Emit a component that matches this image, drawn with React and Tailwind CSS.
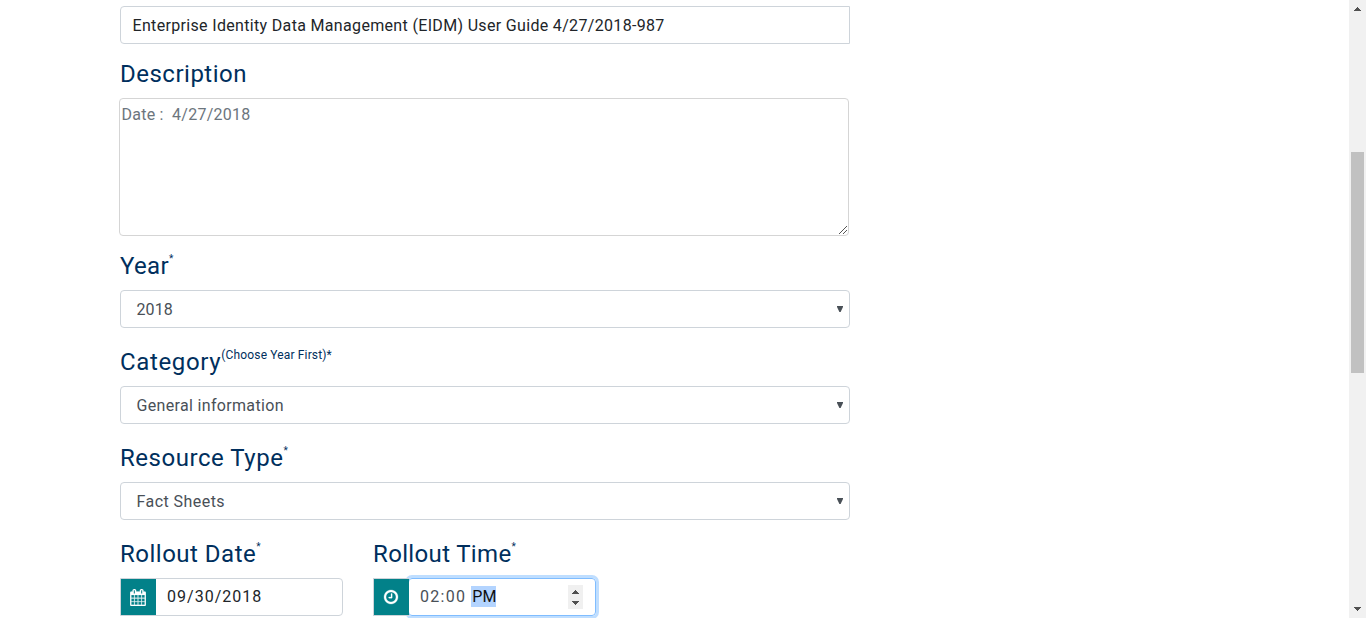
function Label({ children, note = "", tracking, noteClass = "text-[10px] mb-[16px]" }) {
  return (
    <div className="flex h-[54px] items-end pb-[10px] text-[#002f5d]">
      <span className={"whitespace-nowrap text-[24px] leading-[28px] " + tracking}>{children}</span>
      {note && <sup className={"top-0 self-end whitespace-nowrap leading-none " + noteClass}>{note}</sup>}
    </div>
  );
}

function Select({ value, tracking }) {
  return (
    <div className="flex h-[38px] items-center justify-between rounded-[4px] border border-[#ced4da] pr-[6px] pl-[15.5px] text-[#495057]">
      <span className={"mt-[2px] text-[16px] leading-6 " + tracking}>{value}</span>
      <svg width="6" height="6" viewBox="0 0 6 6" className="mb-[1px]" fill="#495057">
        <path d="M0 0H6V1L3.6 6H2.4L0 1Z" />
      </svg>
    </div>
  );
}

function Arrow({ down = false }) {
  return (
    <svg width="7" height="4" viewBox="0 0 7 4" fill="#505050" shapeRendering="crispEdges" className={down ? "rotate-180" : ""}>
      <path d="M3 0H4V1H5V2H6V3H7V4H0V3H1V2H2V1H3Z" />
    </svg>
  );
}

function CalendarIcon() {
  return (
    <svg width="16" height="17" viewBox="0 0 1664 1792" fill="#fff" stroke="#fff" strokeWidth="20" className="mr-[1px]">
      <path d="M128 1664h288v-288H128v288zm352 0h320v-288H480v288zm-352-352h288V992H128v320zm352 0h320V992H480v320zM128 928h288V640H128v288zm736 736h320v-288H864v288zM480 928h320V640H480v288zm768 736h288v-288h-288v288zm-384-352h320V992H864v320zM512 448V160q0-13-9.500-22.500T480 128h-64q-13 0-22.500 9.500T384 160v288q0 13 9.500 22.500T416 480h64q13 0 22.500-9.500T512 448zm736 864h288V992h-288v320zM864 928h320V640H864v288zm384 0h288V640h-288v288zm32-480V160q0-13-9.500-22.500T1248 128h-64q-13 0-22.500 9.500T1152 160v288q0 13 9.500 22.500t22.500 9.500h64q13 0 22.500-9.500t9.500-22.500zm384-64v1280q0 52-38 90t-90 38H128q-52 0-90-38t-38-90V384q0-52 38-90t90-38h128v-96q0-66 47-113T416 0h64q66 0 113 47t47 113v96h384v-96q0-66 47-113t113-47h64q66 0 113 47t47 113v96h128q52 0 90 38t38 90z" />
    </svg>
  );
}

function ClockIcon() {
  return (
    <svg width="14" height="14" viewBox="0 0 1536 1536" fill="#fff" stroke="#fff" strokeWidth="30" className="mr-[1px] overflow-visible">
      <path d="M896 416v448q0 14-9 23t-23 9H544q-14 0-23-9t-9-23v-64q0-14 9-23t23-9h224V416q0-14 9-23t23-9h64q14 0 23 9t9 23zm416 352q0-148-73-273t-198-198-273-73-273 73-198 198-73 273 73 273 198 198 273 73 273-73 198-198 73-273zm224 0q0 209-103 385.500T1153.500 1433 768 1536t-385.500-103T103 1153.500 0 768t103-385.500T382.500 103 768 0t385.500 103T1433 382.500 1536 768z" />
    </svg>
  );
}

export default function App() {
  return (
    <div className="flex h-[618px] justify-between overflow-hidden bg-white font-[Roboto,sans-serif]">
      <main className="ml-[120px] w-[730px] pt-[6px]">
        <div className="flex h-[38px] items-center rounded-l-[4px] border border-[#ced4da] pl-[11.5px] text-[16px] text-[#212529]">
          <span className="mt-[2px] whitespace-nowrap tracking-[0.33px]">Enterprise Identity Data Management (EIDM) User Guide 4/27/2018-987</span>
        </div>

        <Label tracking="tracking-[0.5px]">Description</Label>
        <div className="-ml-px flex h-[138px] w-[730px] justify-between rounded-[4px] border border-[#d5d5d5] pl-[1.5px] text-[16px] text-[#6c757d]">
          <span className="mt-[4px] whitespace-pre leading-6 tracking-[0.24px]">Date :  4/27/2018</span>
          <svg width="10" height="10" viewBox="0 0 10 10" className="self-end" stroke="#555">
            <path d="M1 9L9 1M5 9L9 5" />
          </svg>
        </div>

        <Label note="*" tracking="tracking-[0.35px]">Year</Label>
        <Select value="2018" tracking="tracking-[0.1px]" />

        <div className="pt-1">
          <Label note="(Choose Year First)*" noteClass="text-[12px] mb-[15px] tracking-[0.15px]" tracking="tracking-[0.65px]">Category</Label>
          <Select value="General information" tracking="tracking-[0.33px]" />
        </div>

        <div className="pt-1">
          <Label note="*" tracking="tracking-[0.53px]">Resource Type</Label>
          <Select value="Fact Sheets" tracking="tracking-[0.45px]" />
        </div>

        <div className="flex gap-[30px] pt-1">
          <section className="w-[223px]">
            <Label note="*" tracking="tracking-[0.5px]">Rollout Date</Label>
            <div className="flex h-[38px] overflow-hidden rounded-r-[4px] border border-[#ced4da]">
              <div className="flex w-[35px] items-center justify-center bg-[#028189]"><CalendarIcon /></div>
              <span className="pl-[11px] text-[16px] leading-[35px] tracking-[1.02px] text-[#212529]">09/30/2018</span>
            </div>
          </section>
          <section className="w-[223px]">
            <Label note="*" tracking="tracking-[0.35px]">Rollout Time</Label>
            <div className="flex h-[38px]">
              <div className="z-10 flex w-[36px] items-center justify-center border border-r-0 border-[#ced4da] bg-[#028189]"><ClockIcon /></div>
              <div className="-ml-px flex flex-1 items-center rounded-[4px] border border-[#80bdff] pr-3 pl-[11px] text-[16px] text-[#495057] shadow-[0_0_0_3px_#bfdeff]">
                <span className="tracking-[1.3px]">02:00</span>
                <span className="mb-[2px] ml-[5px] h-[21px] w-[25px] bg-[#b3d4ff] pl-px leading-[21px] text-[#101010]">PM</span>
                <span className="ml-auto flex h-6 w-[15px] flex-col items-center justify-center gap-[7px] bg-[#f0f0f0]">
                  <Arrow />
                  <Arrow down />
                </span>
              </div>
            </div>
          </section>
        </div>
      </main>

      <div className="flex w-[17px] flex-col items-center justify-between bg-[#f1f1f1] pt-[7px] pb-[7px]">
        <Arrow />
        <div className="mb-[93px] h-[221px] w-[13px] bg-[#c1c1c1]" />
        <Arrow down />
      </div>
    </div>
  );
}
